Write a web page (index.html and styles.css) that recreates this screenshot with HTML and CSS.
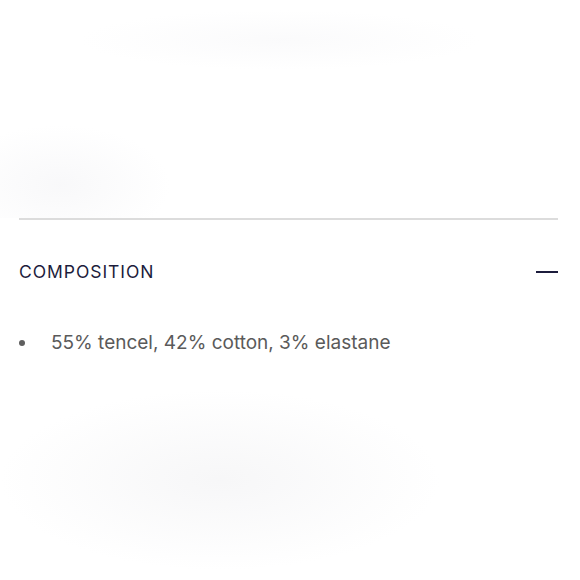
FILE: index.html
```html
<!DOCTYPE html>
<html>
<head>
<meta charset="utf-8">
<link rel="stylesheet" href="styles.css">
</head>
<body>
<div class="page">
  <div class="hero"></div>
  <section class="accordion">
    <div class="head">
      <span class="title">COMPOSITION</span>
      <span class="minus"></span>
    </div>
    <ul class="list">
      <li class="item"><span class="dot"></span><span class="text">55% tencel, 42% cotton, 3% elastane</span></li>
    </ul>
  </section>
</div>
</body>
</html>
```
FILE: styles.css
```css
html, body { margin: 0; padding: 0; background: #fff; }
.page {
  width: 580px; height: 580px; overflow: hidden;
  font-family: Inter, "Noto Sans", sans-serif;
  background:
    radial-gradient(ellipse 220px 90px at 220px 480px, rgba(240,240,242,0.55), rgba(255,255,255,0) 100%),
    #fff;
}
.hero {
  height: 218px;
  background:
    radial-gradient(ellipse 110px 60px at 60px 185px, rgba(236,236,240,0.35), rgba(255,255,255,0) 100%),
    radial-gradient(ellipse 200px 30px at 280px 40px, rgba(246,246,248,0.5), rgba(255,255,255,0) 100%);
}
.accordion { margin: 0 22px 0 19px; border-top: 2px solid #dcdcdc; }
.head { display: flex; justify-content: space-between; align-items: center; height: 103px; }
.title { font-size: 17.5px; letter-spacing: 0.95px; color: #1c1c3c; font-weight: 400; }
.minus { width: 22px; height: 2px; background: #1c1c3c; }
.list { margin: 0; padding: 0; list-style: none; color: #5a5a5a; font-size: 19px; }
.item { display: flex; align-items: center; line-height: 28px; margin-top: 6px; }
.dot { width: 6px; height: 6px; border-radius: 50%; background: #5f5f5f; margin-right: 26px; flex: none; }
```
